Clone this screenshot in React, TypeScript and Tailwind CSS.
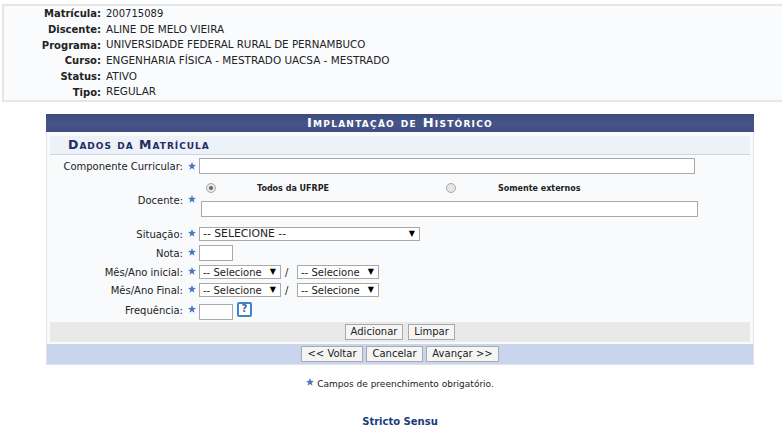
const info = [
  ["Matrícula:", "200715089"],
  ["Discente:", "ALINE DE MELO VIEIRA"],
  ["Programa:", "UNIVERSIDADE FEDERAL RURAL DE PERNAMBUCO"],
  ["Curso:", "ENGENHARIA FÍSICA - MESTRADO UACSA - MESTRADO"],
  ["Status:", "ATIVO"],
  ["Tipo:", "REGULAR"],
];

function Star() {
  return (
    <svg viewBox="0 0 10 10" className="h-[8px] w-[8px] shrink-0">
      <path d="M5 0 L6.3 3.4 L10 3.6 L7.1 5.9 L8.1 9.6 L5 7.5 L1.9 9.6 L2.9 5.9 L0 3.6 L3.7 3.4 Z" fill="#4a76c4" />
    </svg>
  );
}

function Label({ text }: { text: string }) {
  return (
    <div className="flex w-[149px] shrink-0 items-center justify-end">
      <span>{text}</span>
      <span className="ml-[5px] mr-[3px] -translate-y-[1px]">
        <Star />
      </span>
    </div>
  );
}

function FakeSelect({ text, width, wide }: { text: string; width: string; wide?: boolean }) {
  return (
    <div className={`flex h-[14px] items-center justify-between border border-[#a9a9a9] bg-white pl-[3px] pr-[4px] ${wide ? "text-[10.8px]" : "text-[10px]"} ${width}`}>
      <span>{text}</span>
      <span className="text-[8px] leading-none text-black">▼</span>
    </div>
  );
}

function MonthYear({ label }: { label: string }) {
  return (
    <div className="flex h-[18px] items-center">
      <Label text={label} />
      <FakeSelect text="-- Selecione" width="w-[82px]" />
      <span className="ml-[4px] w-[12px]">/</span>
      <FakeSelect text="-- Selecione" width="w-[82px]" />
    </div>
  );
}

function Button({ children, width }: { children: string; width: string }) {
  return (
    <button className={`h-[16px] border border-[#a9a9a9] bg-[#f5f5f5] text-[10px] leading-none text-[#222] ${width}`}>
      {children}
    </button>
  );
}

export default function App() {
  return (
    <div className="h-[425px] w-[782px] overflow-hidden bg-white pt-[4px] font-['DejaVu_Sans',sans-serif] text-[10px] text-[#222]">
      <div className="ml-[2px] flex h-[98px] flex-col justify-center border-2 border-b-2 border-r-0 border-[#e6e6e6] bg-[#fafbfd]">
        {info.map(([k, v], i) => (
          <div key={k} className="flex h-[16px] items-center">
            <span className="w-[97px] shrink-0 text-right font-bold text-[#222]">{k}</span>
            <span className={`ml-[5px] ${i === 0 ? "text-[10px]" : i === 2 ? "text-[10.3px]" : "text-[10.45px]"}`}>{v}</span>
          </div>
        ))}
      </div>

      <div className="ml-[46px] mt-[12px] w-[708px]">
        <div className="flex h-[18px] items-center justify-center bg-gradient-to-b from-[#3a4a7e] via-[#475688] to-[#3f4d80] text-[13px] font-bold tracking-[1.25px] text-white [font-variant:small-caps]">
          Implantação de Histórico
        </div>
        <div className="border-x border-b border-[#dfe3ea] bg-[#f9fafc]">
          <div className="px-[3px] pt-[4px]">
            <div className="flex h-[19px] items-center border-b border-[#c8d5ec] bg-[#edf1f8] pl-[18px] text-[12.5px] font-bold tracking-[1px] text-[#222e60] [font-variant:small-caps]">
              Dados da Matrícula
            </div>

            <div className="flex h-[19px] items-end">
              <Label text="Componente Curricular:" />
              <input className="h-[16px] w-[496px] border border-[#a9a9a9] bg-white" />
            </div>

            <div className="flex h-[51px]">
              <div className="flex h-[52px] items-center">
                <Label text="Docente:" />
              </div>
              <div className="flex flex-col">
                <div className="flex h-[27px] items-center text-[8px] font-bold">
                  <span className="ml-[7px] flex h-[10px] w-[10px] shrink-0 items-center justify-center rounded-full border border-[#a9a9a9] bg-[#e6e6e6]">
                    <span className="h-[4px] w-[4px] rounded-full bg-[#666]" />
                  </span>
                  <span className="ml-[41px] w-[189px] shrink-0 translate-y-[1px]">Todos da UFRPE</span>
                  <span className="h-[10px] w-[10px] shrink-0 rounded-full border border-[#a9a9a9] bg-[#e6e6e6]" />
                  <span className="ml-[42px] translate-y-[1px]">Somente externos</span>
                </div>
                <input className="ml-[2px] h-[16px] w-[497px] border border-[#a9a9a9] bg-white" />
              </div>
            </div>

            <div className="flex h-[18px] items-center">
              <Label text="Situação:" />
              <FakeSelect text="-- SELECIONE --" width="w-[221px]" wide />
            </div>

            <div className="flex h-[20px] items-center">
              <Label text="Nota:" />
              <input className="h-[16px] w-[34px] border border-[#a9a9a9] bg-white" />
            </div>

            <MonthYear label="Mês/Ano inicial:" />
            <MonthYear label="Mês/Ano Final:" />

            <div className="flex h-[23px] items-center pt-[3px]">
              <div className="-translate-y-[2px]">
                <Label text="Frequência:" />
              </div>
              <input className="h-[16px] w-[34px] border border-[#a9a9a9] bg-white" />
              <span className="ml-[4px] flex h-[15px] w-[15px] -translate-y-[3px] items-center justify-center rounded-[2px] border-2 border-[#3d85c6] bg-white text-[10px] font-bold leading-none text-[#2a6cb0]">
                ?
              </span>
            </div>

            <div className="flex h-[20px] items-center justify-center gap-[5px] bg-[#e9e9e9]">
              <Button width="w-[58px]">Adicionar</Button>
              <Button width="w-[47px]">Limpar</Button>
            </div>
          </div>
          <div className="mt-[2px] flex h-[20px] items-center justify-center gap-[3px] bg-[#c8d5ec]">
            <Button width="w-[62px]">{"<< Voltar"}</Button>
            <Button width="w-[57px]">Cancelar</Button>
            <Button width="w-[73px]">{"Avançar >>"}</Button>
          </div>
        </div>
      </div>

      <div className="mt-[13px] flex items-center justify-center pl-[18px] text-[9px]">
        <span className="mr-[3px] -translate-y-[3px]">
          <Star />
        </span>
        Campos de preenchimento obrigatório.
      </div>

      <div className="mt-[23px] pl-[18px] text-center text-[10px] font-bold leading-[14px] text-[#1a3a7e]">Stricto Sensu</div>
    </div>
  );
}
